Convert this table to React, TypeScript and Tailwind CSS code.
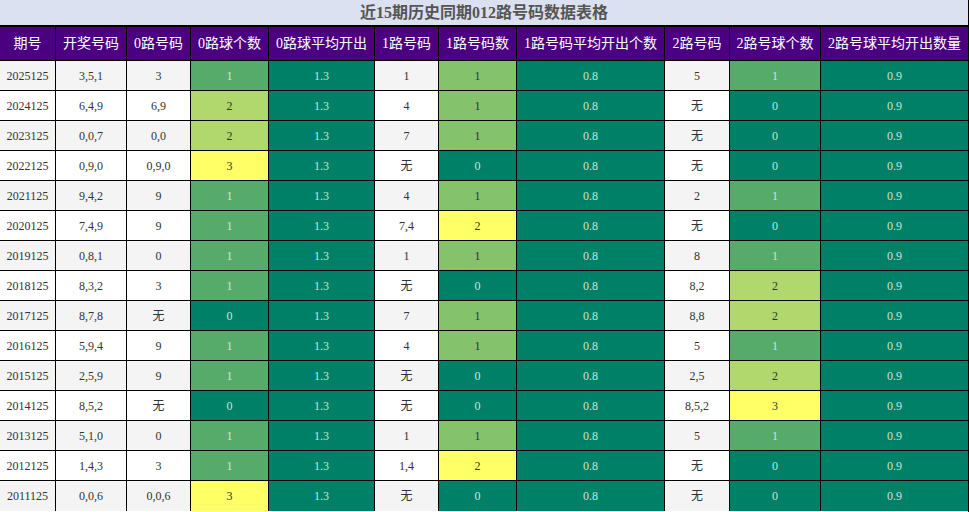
import React from "react";

const cols = "grid grid-cols-[56px_71px_64px_78px_106px_64px_78px_148px_65px_91px_147px]";

const headers = [
  "期号",
  "开奖号码",
  "0路号码",
  "0路球个数",
  "0路球平均开出",
  "1路号码",
  "1路号码数",
  "1路号码平均开出个数",
  "2路号码",
  "2路号球个数",
  "2路号球平均开出数量",
];

type Row = [string, string, string, number, string, number, string, number];

const rows: Row[] = [
  ["2025125", "3,5,1", "3", 1, "1", 1, "5", 1],
  ["2024125", "6,4,9", "6,9", 2, "4", 1, "无", 0],
  ["2023125", "0,0,7", "0,0", 2, "7", 1, "无", 0],
  ["2022125", "0,9,0", "0,9,0", 3, "无", 0, "无", 0],
  ["2021125", "9,4,2", "9", 1, "4", 1, "2", 1],
  ["2020125", "7,4,9", "9", 1, "7,4", 2, "无", 0],
  ["2019125", "0,8,1", "0", 1, "1", 1, "8", 1],
  ["2018125", "8,3,2", "3", 1, "无", 0, "8,2", 2],
  ["2017125", "8,7,8", "无", 0, "7", 1, "8,8", 2],
  ["2016125", "5,9,4", "9", 1, "4", 1, "5", 1],
  ["2015125", "2,5,9", "9", 1, "无", 0, "2,5", 2],
  ["2014125", "8,5,2", "无", 0, "无", 0, "8,5,2", 3],
  ["2013125", "5,1,0", "0", 1, "1", 1, "5", 1],
  ["2012125", "1,4,3", "3", 1, "1,4", 2, "无", 0],
  ["2011125", "0,0,6", "0,0,6", 3, "无", 0, "无", 0],
];

const light = "text-[#cfe3d6]";
const dark = "text-[#333333]";

function scaleClass(v: number, max: number): string {
  if (v === 0) return `bg-[#008066] ${light}`;
  if (v === max) return `bg-[#ffff66] ${dark}`;
  if (max === 2) return `bg-[#84c26b] ${dark}`;
  if (v === 1) return `bg-[#57ab6a] ${light}`;
  return `bg-[#b0d86c] ${dark}`;
}

const font = "font-['Liberation_Serif','Noto_Sans_CJK_SC',serif]";

export default function App() {
  return (
    <div className={`w-[969px] h-[512px] border-r border-black bg-white overflow-hidden ${font}`}>
      <div className="h-[27px] pt-[1px] border-b-2 border-black bg-[#dbe1f1] flex items-center justify-center text-[16px] font-bold text-[#555555]">
        近15期历史同期012路号码数据表格
      </div>
      <div className={`${cols} h-[34px] border-b border-black bg-[#4b0082] text-white text-[14px]`}>
        {headers.map((h, i) => (
          <div
            key={i}
            className={`flex items-center justify-center whitespace-nowrap ${i < 10 ? "border-r border-black" : ""}`}
          >
            {h}
          </div>
        ))}
      </div>
      {rows.map((r, idx) => {
        const zebra = idx % 2 === 0 ? "bg-[#f4f4f4]" : "bg-white";
        const last = idx === rows.length - 1;
        const cells: { t: string; c: string }[] = [
          { t: r[0], c: `${zebra} ${dark}` },
          { t: r[1], c: `${zebra} ${dark}` },
          { t: r[2], c: `${zebra} ${dark}` },
          { t: String(r[3]), c: scaleClass(r[3], 3) },
          { t: "1.3", c: `bg-[#008066] ${light}` },
          { t: r[4], c: `${zebra} ${dark}` },
          { t: String(r[5]), c: scaleClass(r[5], 2) },
          { t: "0.8", c: `bg-[#008066] ${light}` },
          { t: r[6], c: `${zebra} ${dark}` },
          { t: String(r[7]), c: scaleClass(r[7], 3) },
          { t: "0.9", c: `bg-[#008066] ${light}` },
        ];
        return (
          <div
            key={r[0]}
            className={`${cols} ${last ? "h-[31px] pb-[1px]" : "h-[30px] border-b border-black"} text-[12px]`}
          >
            {cells.map((c, i) => (
              <div
                key={i}
                className={`flex items-center justify-center ${c.c} ${i < 10 ? "border-r border-black" : ""}`}
              >
                {c.t}
              </div>
            ))}
          </div>
        );
      })}
    </div>
  );
}
